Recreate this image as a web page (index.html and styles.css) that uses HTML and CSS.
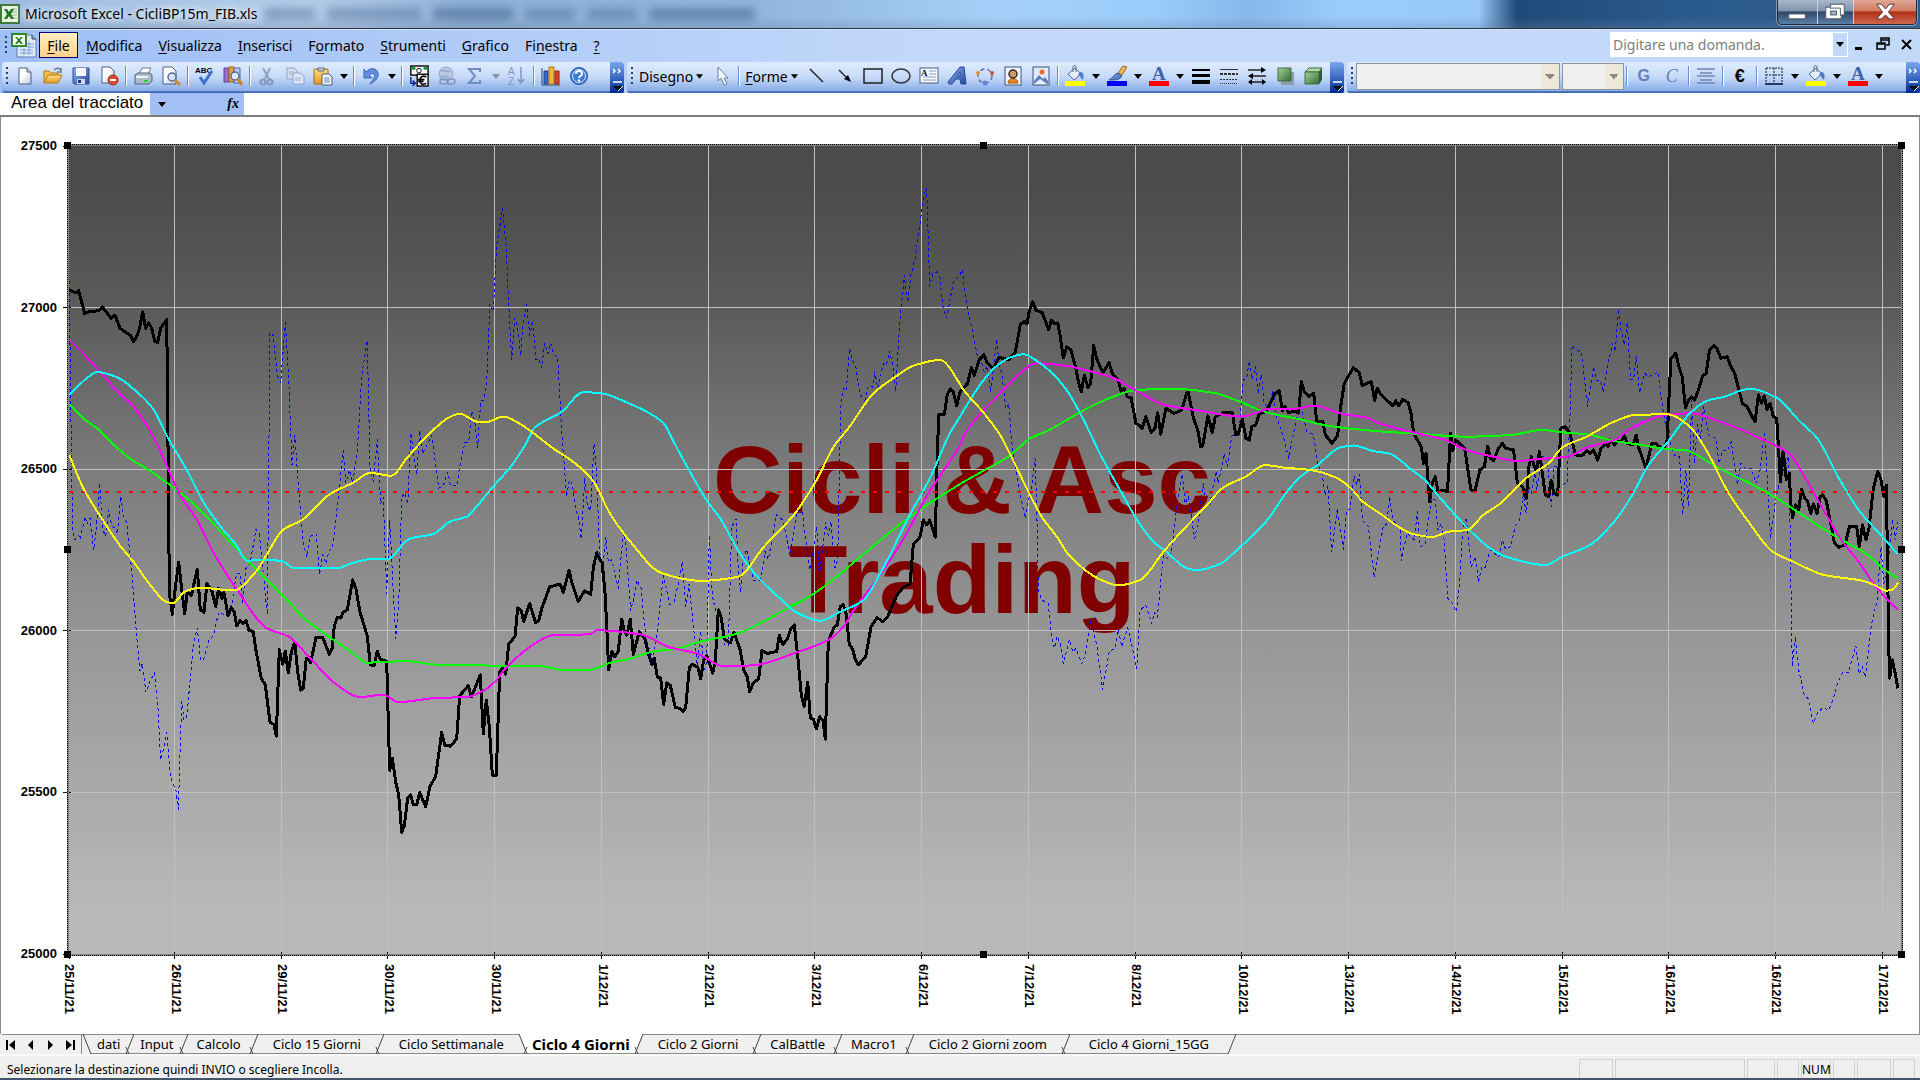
FILE: index.html
```html
<!DOCTYPE html>
<html lang="it">
<head>
<meta charset="utf-8">
<title>Microsoft Excel - CicliBP15m_FIB.xls</title>
<link rel="stylesheet" href="styles.css">
</head>
<body>
<svg class="paints" aria-hidden="true">
  <defs>
    <linearGradient id="gGreen" x1="0" y1="0" x2="1" y2="1"><stop offset="0" stop-color="#a5d39a"/><stop offset="1" stop-color="#2f6b35"/></linearGradient>
    <linearGradient id="gPage" x1="0" y1="0" x2="1" y2="1"><stop offset="0.4" stop-color="#fff"/><stop offset="1" stop-color="#b9c9e0"/></linearGradient>
    <linearGradient id="gGold" x1="0" y1="0" x2="0" y2="1"><stop offset="0" stop-color="#ffe08a"/><stop offset="1" stop-color="#e09a20"/></linearGradient>
    <linearGradient id="gBlue" x1="0" y1="0" x2="1" y2="1"><stop offset="0" stop-color="#8fb4f2"/><stop offset="1" stop-color="#24489c"/></linearGradient>
  </defs>
</svg>
<svg class="symbols" aria-hidden="true">
  <symbol id="excel" viewBox="0 0 20 20"><rect x="1" y="1" width="18" height="18" fill="#e8f2e4" stroke="#3f7a3a" stroke-width="2"/><path d="M12 5h5M12 8h5M12 11h5M12 14h5" stroke="#8fb48a"/><path d="M4 5h3l2 3 2-3h3l-3 5 3 5h-3l-2-3-2 3H4l3-5z" fill="#1f7a1f"/></symbol>
  <symbol id="book" viewBox="0 0 26 26"><path d="M6 3h15l4 4v18H6z" fill="#dfe9f8" stroke="#5d7fb5"/><path d="M21 3v4h4" fill="#8aa6d0" stroke="#33435e"/><path d="M9 18h13M9 21h13M18 10v13M13 16v7M16 12h7M16 15h7" stroke="#7f9fd4"/><rect x="1" y="2" width="14" height="12" fill="#fff" stroke="#2c8a2c" stroke-width="2"/><path d="M4 5h2l2 2 2-2h2l-3 3 3 4h-2l-2-2-2 2H4l3-4z" fill="#1f7a1f"/></symbol>
  <symbol id="new" viewBox="0 0 20 20"><path d="M4 2h8l4 4v12H4z" fill="url(#gPage)" stroke="#4a5f80"/><path d="M12 2v4h4" fill="#cdd9ea" stroke="#4a5f80"/></symbol>
  <symbol id="open" viewBox="0 0 20 20"><path d="M1 17V5h5l2 2h7v3" fill="#f5c24e" stroke="#b07a14"/><path d="M1 17l4-8h14l-4 8z" fill="url(#gGold)" stroke="#b07a14"/><path d="M11 4c3-3 6-2 7 1M18 2v4h-4" fill="none" stroke="#6d7f98" stroke-width="1.5"/></symbol>
  <symbol id="save" viewBox="0 0 20 20"><path d="M2 2h16v16H3l-1-1z" fill="url(#gBlue)" stroke="#2c4a94"/><path d="M5 2h10v8H5z" fill="#f4f7ff"/><path d="M6 13h8v5H6z" fill="#cfd6e4"/><path d="M7 14h3v3H7z" fill="#24387a"/></symbol>
  <symbol id="perm" viewBox="0 0 20 20"><path d="M3 1h8l4 4v12H3z" fill="url(#gPage)" stroke="#4a5f80"/><circle cx="14" cy="14" r="5" fill="#de4a2c" stroke="#a32c14"/><path d="M11 14h6" stroke="#fff" stroke-width="2"/></symbol>
  <symbol id="print" viewBox="0 0 20 20"><path d="M6 8l3-6h9l-3 6z" fill="#fff" stroke="#6a7a92"/><path d="M2 9l3-2h12l2 2v6l-3 3H2z" fill="#aeb9c9" stroke="#4f5f78"/><path d="M3 10h12v2H3z" fill="#f0f3f8"/><path d="M11 14h4v2h-4z" fill="#26d426"/></symbol>
  <symbol id="preview" viewBox="0 0 20 20"><path d="M2 1h9l4 4v13H2z" fill="url(#gPage)" stroke="#4a5f80"/><circle cx="11" cy="11" r="4" fill="#cfe4f8" stroke="#5a6e8c" stroke-width="1.5"/><path d="M14 14l5 5" stroke="#d08a2a" stroke-width="3"/></symbol>
  <symbol id="spell" viewBox="0 0 20 20"><text x="0" y="7" font-size="8" font-weight="700" font-family="Liberation Sans, sans-serif">ABC</text><path d="M5 11l4 6 8-12" fill="none" stroke="#3f6fd0" stroke-width="3"/></symbol>
  <symbol id="research" viewBox="0 0 20 20"><path d="M1 2h5v14H1z" fill="#9a6fc8" stroke="#5b3f8a"/><path d="M6 1h5v15H6z" fill="#e5a04a" stroke="#9a6420"/><path d="M11 2h6v15h-6z" fill="#b9cdec" stroke="#4a6598"/><circle cx="12" cy="10" r="4" fill="#dcecfa" stroke="#566c8f" stroke-width="1.5"/><path d="M15 13l4 6" stroke="#c8862a" stroke-width="3"/></symbol>
  <symbol id="cut" viewBox="0 0 20 20"><path d="M6 2l6 11M13 2L8 13" stroke="#8fa3c4" stroke-width="2"/><circle cx="6" cy="16" r="2.5" fill="none" stroke="#8397bb" stroke-width="2"/><circle cx="13" cy="16" r="2.5" fill="none" stroke="#8397bb" stroke-width="2"/></symbol>
  <symbol id="copy" viewBox="0 0 20 20"><path d="M2 2h7l3 3v8H2z" fill="#d5dfef" stroke="#8fa3c4"/><path d="M8 7h7l4 3v8H8z" fill="#dde6f3" stroke="#8fa3c4"/><path d="M4 6h5M4 8h5M10 12h6M10 14h6" stroke="#a3b4d0"/></symbol>
  <symbol id="paste" viewBox="0 0 20 20"><rect x="1" y="3" width="14" height="15" rx="1" fill="url(#gGold)" stroke="#a06a10"/><path d="M5 5V2h6v3z" fill="#c9ced8" stroke="#5f6a7c"/><path d="M9 8h7l3 3v8H9z" fill="#f2f6fc" stroke="#4a5f80"/><path d="M11 12h5M11 14h6M11 16h6" stroke="#6f88b0"/></symbol>
  <symbol id="undo" viewBox="0 0 20 20"><path d="M3 3v9h8l-3-3c3-3 7-1 5 3-1 2-2 3-4 6 6-3 9-7 8-11-1-5-8-6-12-1z" fill="#5f8ee0" stroke="#3a63b4"/></symbol>
  <symbol id="euroconv" viewBox="0 0 22 24"><rect x="2" y="1" width="19" height="10" fill="#fff" stroke="#000" stroke-width="1.5"/><path d="M3 2h4v3H3zM16 2h4v3h-4z" fill="#0a9a3a"/><circle cx="11" cy="6" r="2.5" fill="none" stroke="#000"/><rect x="9" y="10" width="12" height="13" fill="#fff" stroke="#000" stroke-width="1.5"/><path d="M19 13c-4-2-7 0-7 4s3 5 7 3M10 16h7M10 18h6" fill="none" stroke="#000" stroke-width="1.8"/><path d="M2 13v7h4M4 17l3 3-3 3" fill="none" stroke="#0a1f9a" stroke-width="1.5"/></symbol>
  <symbol id="link" viewBox="0 0 20 20"><circle cx="9" cy="8" r="7" fill="#b9c8e0" stroke="#93a8ca"/><path d="M4 5c4-2 6 2 9 0M3 10c4 2 6-1 9 1" stroke="#93a8ca" fill="none" stroke-width="1.5"/><rect x="3" y="13" width="8" height="5" rx="2.5" fill="none" stroke="#7f95ba" stroke-width="1.5"/><rect x="10" y="13" width="8" height="5" rx="2.5" fill="none" stroke="#7f95ba" stroke-width="1.5"/></symbol>
  <symbol id="sum" viewBox="0 0 20 20"><path d="M15 6V3H4l6 7-6 7h11v-3" fill="none" stroke="#6f8cc0" stroke-width="2"/></symbol>
  <symbol id="sort" viewBox="0 0 20 20"><text x="1" y="9" font-size="10" fill="#7f97c0" font-family="Liberation Sans, sans-serif">A</text><text x="1" y="19" font-size="10" fill="#7f97c0" font-family="Liberation Sans, sans-serif">Z</text><path d="M14 1v16M11 13l3 4 3-4" fill="none" stroke="#7f97c0" stroke-width="1.5"/></symbol>
  <symbol id="chart" viewBox="0 0 20 20"><path d="M1 2v17h18" fill="none" stroke="#33435e"/><path d="M3 5h4v13H3z" fill="#3f66c8" stroke="#22418e"/><path d="M8 1h5v17H8z" fill="#f2b63a" stroke="#a8741a"/><path d="M14 5h4v13h-4z" fill="#d8432c" stroke="#8e2412"/></symbol>
  <symbol id="help" viewBox="0 0 20 20"><circle cx="10" cy="10" r="8.5" fill="#3f7ad8" stroke="#2a57a8"/><circle cx="10" cy="10" r="6.5" fill="none" stroke="#dbe8fc"/><path d="M7 8c0-4 6-4 6 0 0 2-3 2-3 4" fill="none" stroke="#fff" stroke-width="2"/><circle cx="10" cy="14.500" r="1.200" fill="#fff"/></symbol>
  <symbol id="pointer" viewBox="0 0 20 20"><path d="M6 1v14l3-3 3 7 3-1-3-6h4z" fill="#f4f7fc" stroke="#6d7f98"/></symbol>
  <symbol id="line" viewBox="0 0 20 20"><path d="M3 3l13 13" stroke="#222" stroke-width="1.5"/></symbol>
  <symbol id="arrow" viewBox="0 0 20 20"><path d="M4 4l8 8" stroke="#222" stroke-width="1.5"/><path d="M16 16l-7-3 4-4z"/></symbol>
  <symbol id="rect" viewBox="0 0 20 20"><rect x="1" y="3" width="18" height="14" fill="none" stroke="#222" stroke-width="1.5"/></symbol>
  <symbol id="oval" viewBox="0 0 20 20"><ellipse cx="10" cy="10" rx="9" ry="7" fill="none" stroke="#333" stroke-width="1.5"/></symbol>
  <symbol id="textbox" viewBox="0 0 20 20"><rect x="1" y="2" width="18" height="15" fill="#f6f9ff" stroke="#4a5f80"/><text x="2" y="10" font-size="9" font-weight="700" font-family="Liberation Serif, serif">A</text><path d="M10 5h7M10 8h7M4 11h13M4 14h13" stroke="#8a9ab8"/></symbol>
  <symbol id="wordart" viewBox="0 0 20 20"><path d="M1 16L13 1h4l2 17h-5l-1-5H9l-4 5H2zM10 10h3V6z" fill="url(#gBlue)" stroke="#24489c" fill-rule="evenodd"/></symbol>
  <symbol id="diagram" viewBox="0 0 20 20"><circle cx="10" cy="10" r="7" fill="none" stroke="#5f7396" stroke-width="1.5" stroke-dasharray="4 3"/><circle cx="3" cy="7" r="2" fill="#e0903a"/><circle cx="17" cy="7" r="2" fill="#c8503c"/><circle cx="10" cy="17" r="2.500" fill="#6f7fd8"/></symbol>
  <symbol id="clipart" viewBox="0 0 20 20"><rect x="2" y="1" width="16" height="18" fill="#eef3fb" stroke="#3f557c"/><path d="M5 17c0-6 10-6 10 0z" fill="#ee8a1c" stroke="#a3560c"/><circle cx="10" cy="8" r="4" fill="#c99a6a" stroke="#3a2a1c" stroke-width="1.5"/></symbol>
  <symbol id="picture" viewBox="0 0 20 20"><rect x="2" y="1" width="16" height="18" fill="#dfeafb" stroke="#3f557c"/><circle cx="11" cy="6" r="2.500" fill="#ea6a2c"/><path d="M3 15l5-6 4 4 2-2 3 4v3H3z" fill="#5f7fb8"/><path d="M3 18l6-5 7 5z" fill="#e8effa"/></symbol>
  <symbol id="bucket" viewBox="0 0 20 22"><path d="M3 9l7-6 6 6-7 6z" fill="#e6edf8" stroke="#4f678f"/><path d="M8 7V2c0-2 3-2 3 0v5" fill="none" stroke="#4f678f"/><path d="M15 7c4 0 4 4 3 8-3-2-2-4-5-5z" fill="#4a7ac8"/><rect y="16" width="20" height="5" fill="#ff0"/></symbol>
  <symbol id="brush" viewBox="0 0 20 22"><path d="M11 8l5-7 4 1-5 8z" fill="#f0b45a" stroke="#9a6a20"/><path d="M11 8l4 3c-2 4-7 4-13 4 4-2 5-6 9-7z" fill="#5b86cc" stroke="#2f569c"/><rect y="16" width="20" height="5" fill="#00f"/></symbol>
  <symbol id="fontcolor" viewBox="0 0 20 22"><text x="3" y="15" font-size="19" font-weight="700" fill="#3f62a8" font-family="Liberation Serif, serif">A</text><rect y="16" width="20" height="5" fill="#f00"/></symbol>
  <symbol id="lines" viewBox="0 0 20 20"><path d="M1 3h18v2H1zM1 8h18v3H1zM1 14h18v4H1z"/></symbol>
  <symbol id="dashes" viewBox="0 0 20 20"><path d="M1 3.500h18" stroke="#333"/><path d="M1 8h18" stroke="#333" stroke-width="2" stroke-dasharray="3 1"/><path d="M1 13.500h18" stroke="#333" stroke-dasharray="2 1"/><path d="M1 17.500h18" stroke="#333" stroke-dasharray="1 1"/></symbol>
  <symbol id="arrows" viewBox="0 0 20 20"><path d="M1 4h16M3 10h16M2 16h16" stroke="#222" stroke-width="1.5"/><path d="M19 4l-5-3v6zM1 10l5-3v6zM1 16l4-3v6zM19 16l-4-3v6z"/></symbol>
  <symbol id="shadow" viewBox="0 0 20 20"><path d="M6 6h13v13H6z" fill="#8c9cb0"/><path d="M3 2h13v13H3z" fill="url(#gGreen)" stroke="#3b6f3f"/></symbol>
  <symbol id="cube" viewBox="0 0 20 20"><path d="M2 6l4-4h13l-3 4z" fill="#b5dba9" stroke="#3b6f3f"/><path d="M2 6h14v12H2z" fill="url(#gGreen)" stroke="#3b6f3f"/><path d="M16 6l3-4v12l-3 4z" fill="#2e5f34"/></symbol>
  <symbol id="center" viewBox="0 0 20 20"><path d="M1 3h18M4 7h12M1 10h18M4 14h12M1 17h18" stroke="#6f86b4" stroke-width="1.5"/></symbol>
  <symbol id="borders" viewBox="0 0 20 20"><path d="M2 2h16M2 9h16M2 2v15M10 2v15M18 2v15" stroke="#4a5a74" stroke-width="1.5" stroke-dasharray="2 1"/><path d="M1 18h18" stroke="#26395c" stroke-width="2"/></symbol>
  <symbol id="caret" viewBox="0 0 8 5"><path d="M0 0h8L4 5z" fill="currentColor"/></symbol>
  <symbol id="chev" viewBox="0 0 14 30"><path d="M3 6l2 2-2 2M8 6l2 2-2 2" fill="none" stroke="#fff" stroke-width="1.5"/><path d="M3 19h9" stroke="#fff" stroke-width="1.5"/><path d="M3 23h9l-4 5z" fill="#000"/><path d="M8 28l5-5" stroke="#fff"/></symbol>
  <symbol id="capplain" viewBox="0 0 14 30"><path d="M3 19h9" stroke="#fff" stroke-width="1.5"/><path d="M3 23h9l-4 5z" fill="#000"/><path d="M8 28l5-5" stroke="#fff"/></symbol>
  <symbol id="slash" viewBox="0 0 10 20"><path d="M0 0h10v20H0z" fill="#efefef"/><path d="M0 .5h10M0 19.500h10" stroke="#8a8a8a"/><path d="M9 0L1 20M1 13l3 7" stroke="#444" fill="none"/></symbol>
</svg>

<header class="titlebar">
  <svg class="app-icon"><use href="#excel"/></svg>
  <h1>Microsoft Excel - CicliBP15m_FIB.xls</h1>
  <div class="glass-smudge" aria-hidden="true"><i></i><i></i><i></i><i></i><i></i><i></i></div>
  <div class="window-buttons">
    <button aria-label="Riduci a icona"><svg viewBox="0 0 40 24"><rect x="11" y="14" width="17" height="5" fill="#fff" stroke="#4a5568"/></svg></button>
    <button aria-label="Ripristina"><svg viewBox="0 0 36 24"><path d="M13 4h14v11h-3v4H8V7h5z" fill="#fff" stroke="#4a5568"/><path d="M12 8h11v8" fill="none" stroke="#4a5568"/><rect x="13" y="11" width="6" height="4" fill="#9fb3cc" stroke="#4a5568"/></svg></button>
    <button class="close" aria-label="Chiudi"><svg viewBox="0 0 63 24"><path d="M23 4h5l4 5 4-5h5l-6 8 6 7h-5l-4-4-4 4h-5l6-7z" fill="#fff" stroke="#5a3434"/></svg></button>
  </div>
</header>

<nav class="menubar">
  <span class="grip"></span>
  <svg class="book-icon"><use href="#book"/></svg>
  <button class="menu active"><span><u>F</u>ile</span></button>
  <button class="menu"><span><u>M</u>odifica</span></button>
  <button class="menu"><span><u>V</u>isualizza</span></button>
  <button class="menu"><span><u>I</u>nserisci</span></button>
  <button class="menu"><span>F<u>o</u>rmato</span></button>
  <button class="menu"><span><u>S</u>trumenti</span></button>
  <button class="menu"><span><u>G</u>rafico</span></button>
  <button class="menu"><span>Fi<u>n</u>estra</span></button>
  <button class="menu"><span><u>?</u></span></button>
  <div class="ask">
    <input type="text" placeholder="Digitare una domanda." aria-label="Digitare una domanda.">
    <button aria-label="Elenco domande"><svg class="caret"><use href="#caret"/></svg></button>
  </div>
  <div class="mdi">
    <button aria-label="Riduci finestra"><svg viewBox="0 0 14 14"><path d="M3 10h7v3H3z"/></svg></button>
    <button aria-label="Ripristina finestra"><svg viewBox="0 0 14 14"><path d="M5 5V1h8v7h-3M5 3h8" fill="none" stroke="#000" stroke-width="1.5"/><path d="M1 6h8v6H1zM1 7h8" fill="none" stroke="#000" stroke-width="1.5"/></svg></button>
    <button aria-label="Chiudi finestra"><svg viewBox="0 0 14 14"><path d="M2 3l9 9M11 3l-9 9" stroke="#000" stroke-width="2"/></svg></button>
  </div>
</nav>

<div class="toolbars">
  <div class="toolbar">
    <span class="grip"></span>
    <button class="tool" aria-label="Nuovo"><svg><use href="#new"/></svg></button>
    <button class="tool" aria-label="Apri"><svg><use href="#open"/></svg></button>
    <button class="tool" aria-label="Salva"><svg><use href="#save"/></svg></button>
    <button class="tool" aria-label="Autorizzazione"><svg><use href="#perm"/></svg></button>
    <span class="sep"></span>
    <button class="tool" aria-label="Stampa"><svg><use href="#print"/></svg></button>
    <button class="tool" aria-label="Anteprima"><svg><use href="#preview"/></svg></button>
    <span class="sep"></span>
    <button class="tool" aria-label="Controllo ortografia"><svg><use href="#spell"/></svg></button>
    <button class="tool" aria-label="Ricerche"><svg><use href="#research"/></svg></button>
    <span class="sep"></span>
    <button class="tool" aria-label="Taglia"><svg><use href="#cut"/></svg></button>
    <button class="tool" aria-label="Copia"><svg><use href="#copy"/></svg></button>
    <button class="tool" aria-label="Incolla"><svg><use href="#paste"/></svg></button>
    <button class="drop" aria-label="Opzioni Incolla"><svg class="caret"><use href="#caret"/></svg></button>
    <span class="sep"></span>
    <button class="tool" aria-label="Annulla"><svg><use href="#undo"/></svg></button>
    <button class="drop" aria-label="Elenco Annulla"><svg class="caret"><use href="#caret"/></svg></button>
    <span class="sep"></span>
    <button class="tool" aria-label="Conversione Euro"><svg class="swatch"><use href="#euroconv"/></svg></button>
    <button class="tool" aria-label="Collegamento"><svg><use href="#link"/></svg></button>
    <button class="tool" aria-label="Somma"><svg><use href="#sum"/></svg></button>
    <button class="drop dim" aria-label="Elenco Somma"><svg class="caret"><use href="#caret"/></svg></button>
    <button class="tool" aria-label="Ordina"><svg><use href="#sort"/></svg></button>
    <span class="sep"></span>
    <button class="tool" aria-label="Grafico"><svg><use href="#chart"/></svg></button>
    <button class="tool" aria-label="Guida"><svg><use href="#help"/></svg></button>
    <button class="cap" aria-label="Opzioni barra Standard"><svg><use href="#chev"/></svg></button>
  </div>
  <div class="toolbar">
    <span class="grip"></span>
    <button class="label"><span>Dise<u>g</u>no</span><svg class="caret"><use href="#caret"/></svg></button>
    <button class="tool" aria-label="Seleziona oggetti"><svg><use href="#pointer"/></svg></button>
    <span class="sep"></span>
    <button class="label"><span><u>F</u>orme</span><svg class="caret"><use href="#caret"/></svg></button>
    <button class="tool" aria-label="Linea"><svg><use href="#line"/></svg></button>
    <button class="tool" aria-label="Freccia"><svg><use href="#arrow"/></svg></button>
    <button class="tool" aria-label="Rettangolo"><svg><use href="#rect"/></svg></button>
    <button class="tool" aria-label="Ovale"><svg><use href="#oval"/></svg></button>
    <button class="tool" aria-label="Casella di testo"><svg><use href="#textbox"/></svg></button>
    <button class="tool" aria-label="WordArt"><svg><use href="#wordart"/></svg></button>
    <button class="tool" aria-label="Diagramma"><svg><use href="#diagram"/></svg></button>
    <button class="tool" aria-label="ClipArt"><svg><use href="#clipart"/></svg></button>
    <button class="tool" aria-label="Immagine"><svg><use href="#picture"/></svg></button>
    <span class="sep"></span>
    <button class="tool" aria-label="Colore riempimento"><svg class="swatch"><use href="#bucket"/></svg></button>
    <button class="drop" aria-label="Elenco riempimento"><svg class="caret"><use href="#caret"/></svg></button>
    <button class="tool" aria-label="Colore linea"><svg class="swatch"><use href="#brush"/></svg></button>
    <button class="drop" aria-label="Elenco colore linea"><svg class="caret"><use href="#caret"/></svg></button>
    <button class="tool" aria-label="Colore carattere"><svg class="swatch"><use href="#fontcolor"/></svg></button>
    <button class="drop" aria-label="Elenco colore carattere"><svg class="caret"><use href="#caret"/></svg></button>
    <button class="tool" aria-label="Stile linea"><svg><use href="#lines"/></svg></button>
    <button class="tool" aria-label="Stile tratteggio"><svg><use href="#dashes"/></svg></button>
    <button class="tool" aria-label="Stile freccia"><svg><use href="#arrows"/></svg></button>
    <button class="tool" aria-label="Ombreggiatura"><svg><use href="#shadow"/></svg></button>
    <button class="tool" aria-label="Stile 3D"><svg><use href="#cube"/></svg></button>
    <button class="cap" aria-label="Opzioni barra Disegno"><svg><use href="#capplain"/></svg></button>
  </div>
  <div class="toolbar grow">
    <span class="grip"></span>
    <select class="font-name" aria-label="Tipo di carattere" disabled></select>
    <select class="font-size" aria-label="Dimensione carattere" disabled></select>
    <span class="sep"></span>
    <button class="tool glyph bold" aria-label="Grassetto">G</button>
    <button class="tool glyph italic" aria-label="Corsivo">C</button>
    <span class="sep"></span>
    <button class="tool" aria-label="Allinea al centro"><svg><use href="#center"/></svg></button>
    <span class="sep"></span>
    <button class="tool glyph euro" aria-label="Euro">€</button>
    <span class="sep"></span>
    <button class="tool" aria-label="Bordi"><svg><use href="#borders"/></svg></button>
    <button class="drop" aria-label="Elenco bordi"><svg class="caret"><use href="#caret"/></svg></button>
    <button class="tool" aria-label="Riempimento"><svg class="swatch"><use href="#bucket"/></svg></button>
    <button class="drop" aria-label="Elenco colori riempimento"><svg class="caret"><use href="#caret"/></svg></button>
    <button class="tool" aria-label="Carattere"><svg class="swatch"><use href="#fontcolor"/></svg></button>
    <button class="drop" aria-label="Elenco colori carattere"><svg class="caret"><use href="#caret"/></svg></button>
    <button class="cap" aria-label="Opzioni barra Formattazione"><svg><use href="#chev"/></svg></button>
  </div>
</div>

<div class="formula-bar">
  <input class="name-box" type="text" value="Area del tracciato" aria-label="Casella nome">
  <button class="name-drop" aria-label="Elenco nomi"><svg class="caret"><use href="#caret"/></svg></button>
  <button class="fx" aria-label="Inserisci funzione">fx</button>
  <input class="formula" type="text" aria-label="Barra della formula">
</div>

<main class="sheet">
  <div class="y-axis"><span>27500</span><span>27000</span><span>26500</span><span>26000</span><span>25500</span><span>25000</span></div>
  <div class="plot">
    <p class="watermark">Cicli &amp; Asc<br>Trading</p>
    <svg id="series" viewBox="0 0 1832 808" preserveAspectRatio="none" role="img" aria-label="Grafico Ciclo 4 Giorni"></svg>
    <div class="frame"></div>
    <i class="handle n w"></i><i class="handle n c"></i><i class="handle n e"></i>
    <i class="handle m w"></i><i class="handle m e"></i>
    <i class="handle s w"></i><i class="handle s c"></i><i class="handle s e"></i>
  </div>
  <div class="x-axis">
    <span>25/11/21</span><span>26/11/21</span><span>29/11/21</span><span>30/11/21</span><span>30/11/21</span><span>1/12/21</span><span>2/12/21</span><span>3/12/21</span><span>6/12/21</span><span>7/12/21</span><span>8/12/21</span><span>10/12/21</span><span>13/12/21</span><span>14/12/21</span><span>15/12/21</span><span>16/12/21</span><span>16/12/21</span><span>17/12/21</span>
  </div>
</main>

<nav class="tabs">
  <div class="tab-nav">
    <button aria-label="Primo foglio"><svg viewBox="0 0 12 12"><path d="M2 1v10" stroke="#000" stroke-width="2"/><path d="M10 1v10L4 6z"/></svg></button>
    <button aria-label="Foglio precedente"><svg viewBox="0 0 12 12"><path d="M8 1v10L3 6z"/></svg></button>
    <button aria-label="Foglio successivo"><svg viewBox="0 0 12 12"><path d="M3 1v10l5-5z"/></svg></button>
    <button aria-label="Ultimo foglio"><svg viewBox="0 0 12 12"><path d="M1 1v10l6-5zM8 1h2v10H8z"/></svg></button>
  </div>
  <svg class="slash" viewBox="0 0 10 20"><path d="M0 .5h10M9 19.500h1" stroke="#8a8a8a"/><path d="M1 0l8 20" stroke="#444"/></svg>
  <button class="tab tight">dati</button><svg class="slash"><use href="#slash"/></svg>
  <button class="tab tight">Input</button><svg class="slash"><use href="#slash"/></svg>
  <button class="tab">Calcolo</button><svg class="slash"><use href="#slash"/></svg>
  <button class="tab wide">Ciclo 15 Giorni</button><svg class="slash"><use href="#slash"/></svg>
  <button class="tab wide">Ciclo Settimanale</button><svg class="slash" viewBox="0 0 10 20"><path d="M0 0h1l8 20H0z" fill="#efefef"/><path d="M1 0h9v20H9z" fill="#fff"/><path d="M0 .5h1M0 19.500h10" stroke="#8a8a8a"/><path d="M1 0l8 20M9 13l-3 7" stroke="#444"/></svg>
  <button class="tab current">Ciclo 4 Giorni</button><svg class="slash" viewBox="0 0 10 20"><path d="M0 0h9L1 20H0z" fill="#fff"/><path d="M9 .5h1M0 19.500h10" stroke="#8a8a8a"/><path d="M9 0L1 20M1 13l3 7" stroke="#444"/></svg>
  <button class="tab wide">Ciclo 2 Giorni</button><svg class="slash"><use href="#slash"/></svg>
  <button class="tab">CalBattle</button><svg class="slash"><use href="#slash"/></svg>
  <button class="tab">Macro1</button><svg class="slash"><use href="#slash"/></svg>
  <button class="tab wide">Ciclo 2 Giorni zoom</button><svg class="slash"><use href="#slash"/></svg>
  <button class="tab widest">Ciclo 4 Giorni_15GG</button><svg class="slash" viewBox="0 0 10 20"><path d="M0 19.500h1M0 .5h10" stroke="#8a8a8a"/><path d="M9 0L1 20" stroke="#444"/></svg>
  <span class="tab-rest"></span>
</nav>

<footer class="status">
  <span class="message">Selezionare la destinazione quindi INVIO o scegliere Incolla.</span>
  <span class="cell w34"></span><span class="cell w130"></span><span class="cell w28"></span><span class="cell w22"></span><span class="cell w30">NUM</span><span class="cell w22"></span><span class="cell w34"></span><span class="cell w22"></span>
</footer>
<script src="chart.js"></script>
</body>
</html>
```
FILE: styles.css
```css
* { box-sizing: border-box; }
body {
  margin: 0;
  min-height: 100vh;
  display: flex;
  flex-direction: column;
  background: #efefef;
  font-family: "Noto Sans", "Open Sans", sans-serif;
  font-size: 14px;
  color: #000;
  overflow-x: hidden;
}
button, input, select { font: inherit; color: inherit; margin: 0; padding: 0; border: 0; background: none; border-radius: 0; }
button { display: flex; align-items: center; justify-content: center; }
.paints { position: absolute; width: 0; height: 0; }
.symbols { display: none; }
.caret { width: 8px; height: 5px; flex: none; }

/* Title bar */
.titlebar {
  height: 29px;
  display: flex;
  align-items: center;
  border-bottom: 1px solid #2a3648;
  background:
    linear-gradient(180deg, rgba(255,255,255,0) 60%, rgba(110,130,160,.3) 100%),
    linear-gradient(90deg, #9dbbe0 0, #b4cdea 16%, #8fb1d6 24%, #92b6dc 40%, #a6d0fa 52%, #9accfa 60%, #88b8ea 65%, #9accfc 70%, #98c8f8 77%, #1f4a78 79%, #2a5a8c 88%, #2c5a88 100%);
}
.app-icon { width: 20px; height: 20px; flex: none; }
h1 { margin: 0 0 0 5px; font-size: 14px; font-weight: 400; line-height: 20px; white-space: nowrap; padding-right: 8px; text-shadow: 0 0 8px #fff, 0 0 8px #fff; }
.glass-smudge { display: flex; gap: 12px; filter: blur(4px); opacity: .45; }
.glass-smudge i { width: 50px; height: 12px; background: #46688f; }
.glass-smudge i:nth-child(2) { width: 94px; }
.glass-smudge i:nth-child(3) { width: 80px; background: #2c4e78; }
.glass-smudge i:nth-child(6) { width: 106px; background: #2c4e78; }
.window-buttons { margin: 0 3px 4px auto; align-self: flex-start; display: flex; height: 25px; border: 1px solid #1c2c40; border-top: 0; border-radius: 0 0 5px 5px; overflow: hidden; box-shadow: 0 0 0 1px rgba(255,255,255,.4); }
.window-buttons button { width: 40px; background: linear-gradient(#a9b8ca 0, #7f94ae 45%, #2d4866 50%, #5c7fa6 100%); border-right: 1px solid #c5d2e0; }
.window-buttons button:nth-child(2) { width: 36px; }
.window-buttons .close { width: 62px; border: 0; background: linear-gradient(#e2a898 0, #d27a62 45%, #b03018 50%, #d0664a 100%); }
.window-buttons svg { width: 100%; height: 24px; }

/* Menu bar */
.menubar { height: 33px; display: flex; align-items: center; padding: 0 6px 2px 5px; background: linear-gradient(90deg, #9ebef5, #c3d9f9 50%); border-top: 1px solid #d5e2f8; }
.grip { width: 2px; height: 18px; margin-right: 4px; flex: none; background: repeating-linear-gradient(#274176 0 2px, transparent 2px 5px); }
.book-icon { width: 26px; height: 26px; margin-right: 2px; flex: none; }
.menu { height: 26px; padding: 0 8px; white-space: nowrap; }
.menu.active { width: 39px; border: 1px solid #000080; background: linear-gradient(#ffefc4, #ffd08a); padding: 0 6px; }
u { text-decoration: underline; text-underline-offset: 2px; }
.ask { margin: 0 0 2px auto; display: flex; width: 238px; height: 25px; background: #fff; }
.ask input { flex: 1; min-width: 0; padding-left: 3px; }
.ask input::placeholder { color: #808080; opacity: 1; }
.ask button { width: 16px; background: #c3d9f9; border: 1px solid #fff; }
.mdi { display: flex; gap: 10px; margin: 0 0 2px 4px; }
.mdi button, .mdi svg { width: 14px; height: 14px; }

/* Toolbars */
.toolbars { height: 31px; display: flex; gap: 3px; padding-left: 2px; background: linear-gradient(90deg, #9ebef5, #c3d9f9 50%); }
.toolbar { display: flex; align-items: center; padding: 0 0 3px 4px; border-radius: 3px 0 0 3px; background: linear-gradient(#e0ecfe, #c4d9f8 50%, #8aade8 92%, #3f68b4 96%); }
.toolbar .grip { margin-right: 3px; }
.toolbar.grow { flex: 1; }
.tool { width: 28px; height: 28px; flex: none; }
.tool svg { width: 20px; height: 20px; }
.tool .swatch { height: 22px; }
.drop { width: 14px; height: 28px; flex: none; }
.dim { color: #8a8f98; }
.sep { width: 6px; height: 20px; flex: none; background: linear-gradient(90deg, transparent 2px, #6a8ccb 2px 3px, #fff 3px 4px, transparent 4px); }
.label { gap: 3px; padding: 0 5px 0 3px; white-space: nowrap; }
.label .caret { width: 7px; }
.cap { width: 14px; height: 31px; margin: 0 0 -3px auto; flex: none; border-radius: 0 3px 3px 0; background: linear-gradient(#7ba6ee, #3c69c4 50%, #002c93); }
.cap svg { width: 14px; height: 30px; }
.toolbar:first-child .cap { margin-left: 17px; }
.toolbar:nth-child(2) .cap { margin-left: 3px; }
select { height: 27px; appearance: none; opacity: 1; border: 1px solid #8f959e; background: linear-gradient(45deg, transparent 50%, #8a8a80 50%) right 9px center / 5px 5px no-repeat, linear-gradient(-45deg, transparent 50%, #8a8a80 50%) right 4px center / 5px 5px no-repeat, linear-gradient(#ece9d8, #ece9d8) right / 18px 100% no-repeat, #efefef; }
.font-name { width: 204px; margin-right: 2px; }
.font-size { width: 62px; }
.glyph { font-family: "Liberation Sans", sans-serif; font-size: 16px; font-weight: 700; color: #6880b4; }
.italic { font-style: italic; font-weight: 400; font-family: "Liberation Serif", serif; font-size: 18px; }
.euro { color: #000; font-size: 18px; }

/* Formula bar */
.formula-bar { height: 24px; display: flex; padding-left: 2px; background: #fff; border-bottom: 2px solid #7c7c7c; }
.name-box { width: 148px; padding-left: 9px; height: 20px; font-family: "Liberation Sans", sans-serif; font-size: 17px; }
.name-drop { width: 24px; height: 22px; background: #a2c0f5; }
.fx { width: 70px; height: 22px; justify-content: flex-end; padding-right: 5px; background: #a2c0f5; font: italic 700 14px "Liberation Serif", serif; }
.formula { flex: 1; }

/* Chart sheet */
.sheet { flex: 1; display: grid; grid-template: 1fr 80px / 68px 1fr 18px; padding-top: 29px; background: #fff; border: solid #8a8a8a; border-width: 0 1px 0 1px; font-family: "Liberation Sans", sans-serif; font-size: 13px; font-weight: 700; }
.y-axis { display: flex; flex-direction: column; justify-content: space-between; align-items: flex-end; padding-right: 12px; margin: -8px 0; line-height: 16px; }
.plot { position: relative; min-height: 300px; background: linear-gradient(#4a4a4a 0, #4c4c4c 5%, #5b5b5b 20%, #7b7b7b 40%, #969696 60%, #aaa 80%, #b9b9b9 95%, #b9b9b9 100%); }
.watermark { position: absolute; inset: 0 46px 40px 0; margin: 0; display: flex; align-items: center; justify-content: center; text-align: center; font-size: 96px; line-height: 100px; color: #800000; }
#series { position: absolute; inset: 0; width: 100%; height: 100%; overflow: visible; shape-rendering: crispEdges; }
#series * { vector-effect: non-scaling-stroke; fill: none; stroke-linejoin: round; }
.grid-line { stroke: #c0c0c0; stroke-width: 1px; }
.tick { stroke: #000; stroke-width: 1px; }
.price { stroke: #000; stroke-width: 3px; }
.green { stroke: #0f0; stroke-width: 2px; }
.magenta { stroke: #f0f; stroke-width: 2px; }
.cyan { stroke: #0ff; stroke-width: 2px; }
.yellow { stroke: #ff0; stroke-width: 2px; }
.oscillator { stroke: #00f; stroke-width: 1px; stroke-dasharray: 3 3; }
.level { stroke: #f00; stroke-width: 2px; stroke-dasharray: 4 8; }
.frame { position: absolute; inset: -2px; border: 2px solid #808080; outline: 1px dotted #000; outline-offset: -1px; }
.handle { position: absolute; width: 7px; height: 7px; background: #000; }
.n { top: -4px; } .m { top: calc(50% - 4px); } .s { bottom: -4px; }
.w { left: -5px; } .c { left: calc(50% - 5px); } .e { right: -4px; }
.x-axis { grid-column: 2; display: grid; grid-template-columns: repeat(17, 1067fr) 180fr; padding-top: 10px; margin-left: -9px; margin-right: 9px; }
.x-axis span { writing-mode: vertical-rl; line-height: 18px; width: 18px; height: 56px; white-space: nowrap; }

/* Sheet tabs */
.tabs { height: 22px; display: flex; padding-left: 2px; border-bottom: 2px solid #fafafa; font-size: 13px; }
.tab-nav { display: flex; width: 80px; flex: none; gap: 4px; padding-left: 1px; border-top: 1px solid #8a8a8a; border-right: 1px solid #8a8a8a; }
.tab-nav button { width: 16px; }
.tab-nav svg { width: 12px; height: 12px; }
.slash { width: 10px; height: 20px; flex: none; }
.tab { height: 20px; padding: 0 8px; border: solid #8a8a8a; border-width: 1px 0; background: #efefef; white-space: nowrap; }
.tab.tight { padding: 0 5px; }
.tab.wide { padding: 0 14px; }
.tab.widest { padding: 0 18px; }
.tab.current { padding: 0 4px; font-size: 15px; font-weight: 700; background: #fff; border-top-color: #fff; }
.tab-rest { flex: 1; border-top: 1px solid #8a8a8a; }

/* Status bar */
.status { height: 24px; display: flex; align-items: flex-end; gap: 2px; padding: 0 5px 0 7px; border-bottom: 2px solid #44546a; font-size: 12px; line-height: 16px; }
.message { flex: 1; }
.cell { height: 19px; border: 1px solid #d0d0d0; border-bottom: 0; text-align: center; line-height: 20px; }
.w22 { width: 22px; } .w28 { width: 28px; } .w30 { width: 30px; } .w34 { width: 34px; } .w130 { width: 130px; }
```
FILE: chart.js
```js
// Each curve is stored as four runs. A run has its own origin and scale,
// and converts to plot units with x = (X / kx + ox), y = (Y / ky + oy).
const runs = [
  { ox: -69, oy: -16, kx: 3, ky: 2.178 },
  { ox: 411, oy: 34, kx: 3, ky: 2.45 },
  { ox: 831, oy: 34, kx: 3, ky: 2.904 },
  { ox: 1311, oy: 134, kx: 2.904, ky: 3 }
];

const curves = {
  oscillator: [
    "208,330 212,600 218,875 224,893 236,883 240,892 255,842 262,858 270,845 281,915 290,860 299,768 308,870 317,885 326,828 335,862 345,868 352,880 362,798 371,842 380,855 395,960 410,1105 420,1178 427,1162 438,1225 450,1200 464,1182 474,1260 482,1372 490,1350 500,1312 512,1410 528,1440 535,1480 545,1245 552,1285 560,1282 580,1120 592,1085 602,1155 610,1155 628,1108 640,1102 656,1050 690,1060 700,1010 710,965 720,965 728,1030 738,955 750,945 768,870 778,880 802,1055 810,440 820,448 832,535 842,550 856,420 866,540 876,730 884,665 895,770 910,900 920,930 930,885 948,880 959,968 968,925 978,945 986,918 998,908 1012,820 1030,698 1038,768 1048,740 1058,768 1072,700 1085,535 1102,458 1110,735 1120,765 1132,675 1142,815 1150,800 1160,1010 1169,850 1187,1108 1196,1030 1205,800 1215,790 1223,815 1232,660 1250,750 1259,655 1268,705 1295,665 1316,780 1330,775 1343,745 1352,775 1370,775 1380,730 1395,680 1406,680 1415,612 1425,640 1433,692 1442,590 1450,590 1460,550 1470,380 1480,395 1490,250 1508,170 1518,250 1526,380 1535,500 1544,410 1552,425",
    "122,430 130,345 140,305 149,380 158,345 168,440 176,438 185,460 194,400 203,425 212,400 220,425 233,435 245,620 260,775 268,735 277,745 287,805 296,830 304,880 314,730 322,800 332,810 342,645 350,720 358,900 367,970 377,875 385,935 395,930 415,1000 430,865 438,900 452,1055 460,1030 470,980 483,1000 498,1125 518,1175 530,1120 550,970 570,1040 582,1035 600,970 607,935 617,1045 627,990 640,1090 652,1190 662,1105 672,1200 680,1180 688,870 697,1020 707,1055 720,1070 735,1140 745,1140 755,850 768,830 775,950 782,1010 790,930 800,905 820,980 842,980 855,910 865,930 890,820 910,835 930,920 950,820 965,800 975,870 990,955 1010,850 1018,970 1037,838 1045,870 1053,838 1065,950 1073,930 1082,560 1090,510 1099,515 1109,412 1117,440 1128,460 1140,525 1155,540 1165,505 1178,508 1184,468 1193,510 1210,450 1218,455 1229,420 1238,455 1247,518 1260,340 1273,235 1283,300 1292,235 1305,195 1322,95 1332,35 1340,20 1349,260 1358,230 1370,225 1380,240 1388,310 1400,338 1420,250 1440,232",
    "187,260 195,330 205,390 215,425 232,510 245,530 253,558 262,540 272,615 280,550 290,462 298,540 305,560 318,665 326,650 335,760 350,860 375,983 383,940 395,890 405,808 410,940 415,1190 425,1220 445,1230 455,1330 463,1360 472,1325 482,1350 490,1405 508,1335 518,1370 528,1360 545,1405 555,1380 572,1280 590,1350 608,1480 628,1370 645,1360 655,1305 665,1355 683,1300 695,1350 710,1418 720,1250 737,1235 755,1288 763,1255 772,1270 790,1090 805,1100 815,1075 830,950 847,855 855,940 865,920 884,1042 895,990 910,880 920,950 930,940 948,845 955,880 973,795 982,832 995,745 1018,725 1030,580 1040,575 1048,525 1056,580 1066,542 1075,620 1084,565 1092,650 1110,660 1118,610 1130,690 1150,745 1166,808 1190,690 1203,660 1220,730 1240,740 1255,830 1266,850 1275,915 1284,890 1295,1080 1312,955 1330,1072 1340,960 1350,955 1362,860 1370,885 1378,855 1388,990 1405,1005 1423,1155 1440,1060 1450,1005 1460,1000 1469,920 1480,990 1500,1010",
    "62,843 70,800 80,760 100,780 108,695 117,800 130,795 150,655 160,660 168,750 178,730 186,775 197,955 210,970 222,995 232,900 240,745 250,712 265,860 277,830 286,905 296,860 305,863 320,810 345,830 355,780 365,808 380,800 392,740 405,720 416,645 425,700 432,620 440,640 450,570 456,630 470,530 485,530 498,680 506,560 514,560 523,615 543,610 552,400 558,195 568,210 585,215 603,380 620,260 628,300 640,300 648,338 660,260 676,190 683,215 693,88 700,150 710,195 718,128 728,300 737,295 744,228 754,338 768,280 780,290 808,275 820,380 830,440 835,400 845,500 855,525 870,530 879,705 888,570 896,680 905,360 913,550 922,435 930,480 940,380 955,465 975,475 985,550 995,510 1010,510 1020,485 1038,615 1048,550 1060,565 1078,565 1092,610 1103,575 1117,455 1134,775 1150,650 1165,590 1187,530 1192,800 1195,1050 1198,1160 1206,1070 1216,1170 1232,1245 1243,1255 1258,1330 1270,1300 1285,1283 1303,1290 1315,1260 1330,1205 1345,1175 1360,1178 1382,1098 1392,1182 1400,1160 1410,1192 1425,1050 1437,980 1443,970 1455,800 1463,910 1475,870 1488,718 1496,780 1504,725"
  ],
  price: [
    "208,348 228,355 236,350 254,400 266,396 290,394 298,392 307,385 333,410 345,403 360,432 392,448 401,461 413,445 419,430 428,396 437,432 446,420 455,432 464,460 473,463 482,432 500,413 503,600 506,880 509,1015 517,1055 527,990 536,941 545,1000 554,1054 562,1005 574,1014 583,985 592,957 601,1045 612,1050 621,988 636,1005 647,1038 656,998 665,1020 672,1008 684,1057 694,1040 703,1050 710,1080 720,1068 730,1075 738,1068 747,1090 760,1092 766,1125 784,1195 796,1208 810,1290 822,1295 829,1320 838,1132 848,1163 856,1135 865,1182 874,1138 884,1115 893,1180 902,1220 910,1215 919,1150 932,1160 948,1105 968,1105 988,1142 996,1130 1003,1080 1012,1062 1022,1063 1030,1050 1042,1045 1058,980 1068,1000 1080,1050 1102,1102 1111,1165 1122,1167 1132,1135 1140,1152 1160,1157 1165,1290 1169,1395 1177,1368 1187,1420 1196,1448 1205,1530 1213,1515 1223,1455 1232,1448 1240,1470 1250,1470 1259,1443 1277,1474 1290,1430 1307,1407 1325,1312 1334,1340 1352,1342 1370,1326 1379,1232 1405,1210 1414,1235 1441,1187 1450,1315 1459,1242 1468,1300 1477,1405 1489,1405 1499,1180 1508,1172 1517,1185 1526,1120 1545,1103",
    "113,1048 124,1055 131,1082 149,1038 167,1085 176,1080 185,1050 209,997 240,990 250,1010 267,956 277,990 295,1033 313,1007 332,1015 340,950 350,913 367,940 376,1020 386,1200 396,1155 404,1168 415,1155 425,1076 433,1105 441,1115 451,1076 460,1162 478,1107 495,1125 505,1160 516,1187 523,1172 532,1218 542,1220 551,1285 560,1232 571,1238 586,1292 600,1295 609,1303 617,1293 628,1195 637,1187 653,1193 662,1222 671,1175 680,1165 698,1208 706,1180 715,1053 724,1072 733,1125 751,1134 762,1108 780,1150 791,1200 802,1218 809,1254 820,1232 836,1222 846,1153 862,1160 890,1155 898,1115 908,1138 922,1125 932,1100 943,1090 955,1180 964,1262 973,1290 983,1230 991,1318 1001,1322 1009,1345 1019,1315 1029,1325 1036,1370 1045,1130 1063,1095 1072,1090 1081,1045 1090,1040 1099,1065 1108,1138 1118,1150 1126,1175 1135,1188 1157,1168 1173,1095 1191,1072 1208,1082 1222,1072 1250,1018 1270,998 1290,990 1300,892 1320,875 1330,833 1340,845 1349,833 1366,875 1371,700 1376,575 1393,575 1402,525 1411,512 1420,520 1430,553",
    "180,616 203,590 214,545 223,567 238,522 252,508 261,530 279,548 297,515 325,522 346,500 361,420 373,410 381,418 388,380 398,354 408,378 427,386 446,435 454,407 463,416 473,415 481,455 490,517 500,485 512,492 527,545 536,590 544,615 553,567 564,602 572,590 581,480 590,520 609,560 627,530 637,562 655,582 663,613 672,605 682,630 693,632 708,707 718,712 727,722 737,687 754,733 765,720 773,676 782,738 798,663 822,678 845,668 861,616 865,616 880,690 893,725 902,775 908,772 924,685 937,733 946,688 972,675 997,675 1007,740 1015,738 1027,695 1038,750 1048,755 1056,715 1067,712 1077,680 1098,672 1125,620 1138,612 1147,670 1156,658 1165,675 1185,672 1196,677 1204,585 1213,615 1226,628 1241,620 1250,702 1268,700 1276,740 1296,765 1313,742 1321,665 1333,590 1360,545 1378,560 1387,597 1414,585 1424,640 1432,605 1442,622",
    "38,378 46,362 55,378 66,358 82,368 90,400 98,460 120,500 126,550 134,520 144,665 152,610 160,590 169,637 182,630 196,635 205,460 211,512 220,480 246,505 264,630 276,632 290,570 303,560 313,498 320,535 330,542 344,505 356,490 365,505 388,510 399,610 414,620 425,655 432,560 440,530 448,560 455,570 463,515 480,645 490,650 497,600 505,640 516,645 525,445 537,440 550,455 568,525 590,525 600,512 610,520 620,510 632,540 642,505 654,492 662,500 670,480 682,495 690,485 700,485 710,468 718,490 735,495 744,465 752,505 772,565 790,490 800,490 812,500 824,505 834,480 840,330 845,235 859,220 868,260 878,290 887,383 897,358 905,350 914,360 926,325 938,285 947,282 957,210 970,197 978,205 990,235 1008,230 1018,258 1030,280 1040,320 1052,370 1066,380 1078,405 1089,425 1099,345 1108,370 1116,348 1124,390 1133,370 1142,410 1152,415 1158,520 1163,605 1171,510 1180,598 1189,580 1192,660 1198,713 1207,675 1216,690 1224,628 1234,655 1242,665 1251,700 1259,672 1269,702 1278,650 1286,645 1296,662 1306,715 1320,790 1332,802 1350,795 1364,738 1384,738 1392,800 1401,735 1411,780 1420,745 1432,630 1445,575 1454,595 1463,650 1470,615 1474,850 1477,1080 1480,1195 1488,1140 1497,1185 1504,1225"
  ],
  green: [
    "208,598 250,628 300,655 340,685 395,718 450,742 500,768 550,795 590,820 650,865 700,905 780,965 850,1015 920,1068 1000,1110 1060,1140 1100,1160 1220,1157 1320,1165 1400,1165 1500,1167",
    "60,1190 180,1191 245,1200 330,1200 390,1183 450,1173 510,1157 600,1146 660,1131 770,1112 850,1082 920,1050 985,1022 1050,985 1160,910 1290,825 1440,745",
    "240,850 330,800 388,752 450,725 530,680 600,645 660,622 700,611 820,606 940,618 1010,640 1100,675 1200,695 1280,713 1350,722 1440,730",
    "120,462 250,470 380,465 470,450 530,457 600,463 680,483 760,495 830,507 890,511 920,525 980,562 1080,613 1160,660 1270,735 1350,785 1410,820 1470,873 1504,895"
  ],
  magenta: [
    "208,457 260,495 310,535 355,572 400,602 460,668 500,730 540,795 590,848 640,920 710,1000 800,1085 865,1103 930,1150 1010,1208 1080,1235 1150,1230 1195,1246 1310,1237 1400,1235 1460,1217",
    "18,1248 50,1225 70,1203 160,1138 220,1115 330,1113 350,1103 480,1113 570,1145 650,1160 735,1192 830,1188 940,1160 1045,1127 1090,1095 1120,1055 1150,1022 1190,980 1270,880 1340,775 1400,700 1440,650",
    "190,745 240,680 300,620 350,570 410,532 500,540 570,555 640,575 710,612 790,652 900,670 1025,687 1110,665 1190,664 1240,655 1330,680 1400,690 1440,707",
    "100,458 190,480 250,510 320,528 400,543 450,538 545,530 600,503 680,480 730,445 780,420 840,403 905,400 960,415 1020,437 1110,478 1190,522 1230,585 1280,675 1340,780 1390,845 1440,920 1504,990"
  ],
  cyan: [
    "208,577 270,535 290,527 350,538 410,570 460,608 500,665 560,740 610,810 660,862 710,905 740,938 800,936 850,940 880,954 1010,955 1050,945 1110,935 1160,935 1230,890 1300,880 1350,853 1400,842 1430,820 1470,785 1510,752",
    "90,705 135,650 165,606 245,568 310,520 360,522 440,545 550,595 580,640 620,700 680,785 720,828 780,915 830,970 900,1025 950,1060 1020,1080 1080,1058 1150,1030 1200,965 1290,820 1350,730 1410,620 1440,580",
    "200,655 250,582 290,540 340,512 370,506 410,525 450,555 500,610 550,695 600,795 660,900 710,985 760,1050 800,1080 860,1127 890,1133 960,1115 1010,1075 1100,990 1165,900 1210,855 1250,830 1320,777 1360,771 1420,787 1470,795",
    "90,568 130,600 180,660 250,740 320,805 360,828 480,855 530,830 610,795 680,725 730,650 780,555 840,480 900,400 950,362 1000,350 1075,326 1150,352 1220,425 1270,475 1330,590 1390,690 1450,760 1504,822"
  ],
  yellow: [
    "208,708 250,780 300,840 360,905 400,940 450,990 500,1028 520,1030 555,1005 600,997 700,1003 770,960 800,925 850,870 905,850 990,793 1060,768 1110,747 1175,753 1220,715 1290,660 1350,625 1380,618 1430,635 1460,636 1510,624 1560,640",
    "160,620 215,655 290,697 340,738 390,817 450,885 545,963 660,982 775,972 850,900 940,822 960,800 1010,735 1060,655 1110,603 1180,523 1250,480 1300,455 1380,441 1440,500",
    "185,602 250,675 300,740 340,815 390,915 430,985 470,1035 510,1093 600,1160 655,1177 720,1162 790,1080 850,1015 920,945 970,893 1040,860 1095,828 1150,835 1230,842 1310,865 1350,893 1390,935 1450,975",
    "50,738 95,762 150,771 200,755 255,750 300,705 350,670 430,590 490,550 530,502 600,470 680,425 740,405 835,403 900,440 950,515 1010,635 1070,725 1140,815 1200,845 1290,885 1400,902 1440,917 1470,932 1490,928 1504,908"
  ]
};

const svg = document.getElementById("series");

function add(tag, className, attributes) {
  const node = document.createElementNS("http://www.w3.org/2000/svg", tag);
  node.setAttribute("class", className);
  for (const [key, value] of Object.entries(attributes)) node.setAttribute(key, value);
  svg.appendChild(node);
}

for (let i = 1; i < 5; i++) {
  const y = i * 161.6;
  add("line", "grid-line", { x1: 0, x2: 1832, y1: y, y2: y });
}
for (let i = 0; i < 6; i++) add("line", "tick", { x1: -6, x2: 2, y1: i * 161.6, y2: i * 161.6 });
for (let i = 0; i < 18; i++) {
  const x = Math.max(0, i * 106.76 - 1.5);
  if (i) add("line", "grid-line", { x1: x, x2: x, y1: 0, y2: 808 });
  add("line", "tick", { x1: x, x2: x, y1: 806, y2: 813 });
}

function pointsOf(name) {
  return curves[name].flatMap((text, i) => {
    const r = runs[i];
    return text.split(" ").map(pair => {
      const [x, y] = pair.split(",").map(Number);
      return [x / r.kx + r.ox, y / r.ky + r.oy];
    });
  });
}

function draw(name) {
  add("polyline", name, { points: pointsOf(name).map(p => p.map(v => v.toFixed(1)).join(",")).join(" ") });
}

// Moving averages are eased between their samples. The slope at each sample
// is averaged from its neighbours, and is flat at a peak or a trough.
function drawSmooth(name) {
  const p = pointsOf(name);
  const rise = i => (p[i + 1][1] - p[i][1]) / (p[i + 1][0] - p[i][0]);
  const slope = i => {
    if (i === 0) return rise(0);
    if (i === p.length - 1) return rise(i - 1);
    const a = rise(i - 1), b = rise(i);
    return a * b <= 0 ? 0 : 2 * a * b / (a + b);
  };
  let d = "M" + p[0].join(" ");
  for (let i = 0; i < p.length - 1; i++) {
    const h = (p[i + 1][0] - p[i][0]) / 3;
    d += ` C${p[i][0] + h} ${p[i][1] + h * slope(i)} ${p[i + 1][0] - h} ${p[i + 1][1] - h * slope(i + 1)} ${p[i + 1][0]} ${p[i + 1][1]}`;
  }
  add("path", name, { d });
}

draw("oscillator");
draw("price");
add("line", "level", { x1: 0, x2: 1828, y1: 346, y2: 346 });
["green", "magenta", "cyan", "yellow"].forEach(drawSmooth);
```
